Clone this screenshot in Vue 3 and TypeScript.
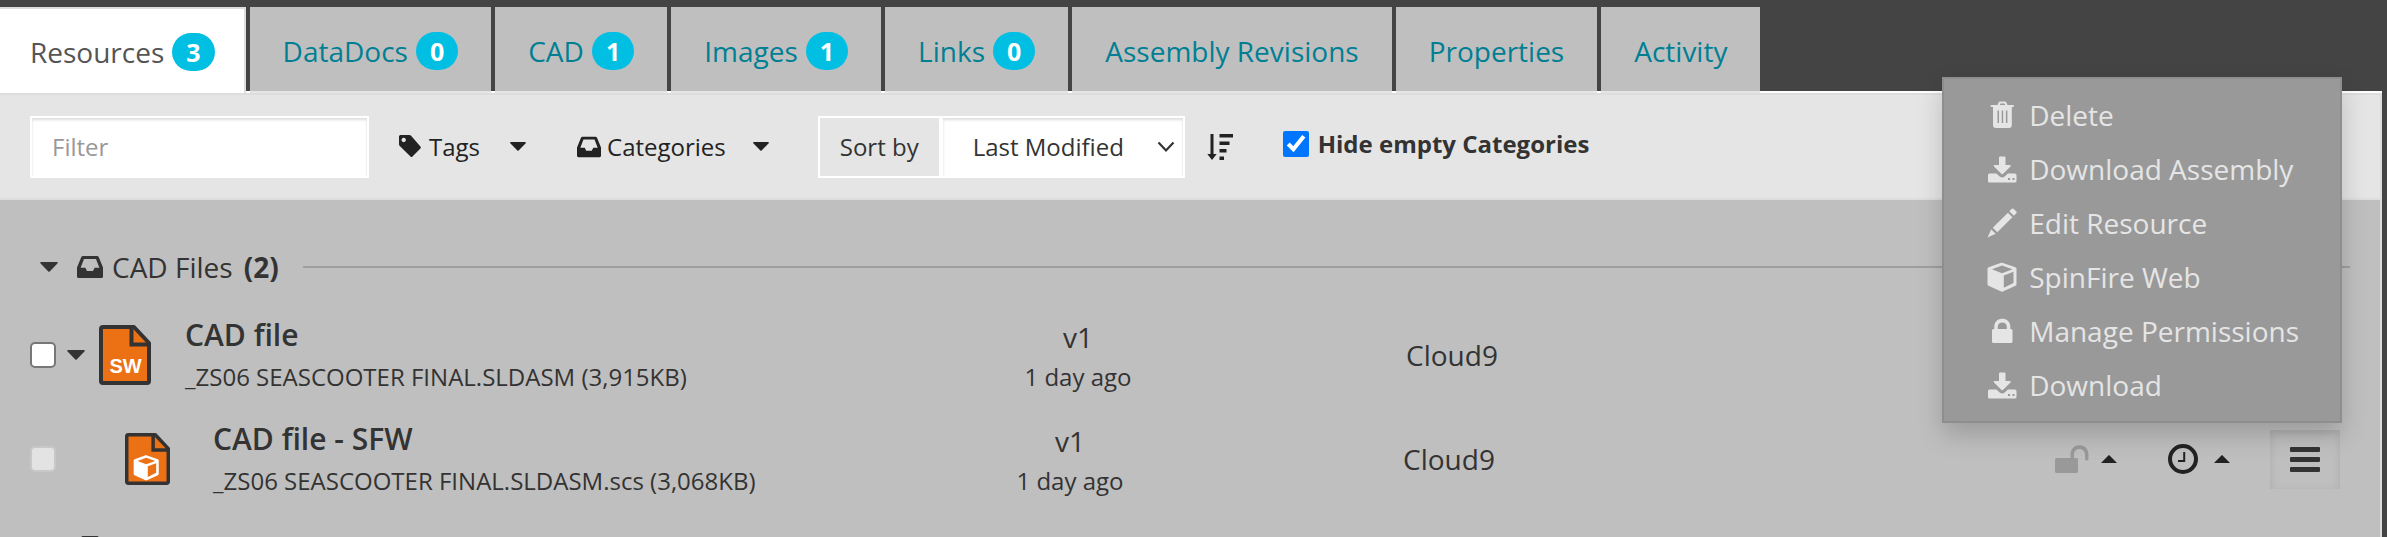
<script setup lang="ts">
import { ref } from 'vue'

interface Tab { label: string; count?: number }
interface MenuItem { label: string; icon: string }
interface FileRow { title: string; file: string; version: string; age: string; owner: string; child: boolean }

const tabs: Tab[] = [
  { label: 'Resources', count: 3 },
  { label: 'DataDocs', count: 0 },
  { label: 'CAD', count: 1 },
  { label: 'Images', count: 1 },
  { label: 'Links', count: 0 },
  { label: 'Assembly Revisions' },
  { label: 'Properties' },
  { label: 'Activity' },
]
const active = ref('Resources')
const filter = ref('')
const sortKey = ref('Last Modified')
const hideEmpty = ref(true)

const menu: MenuItem[] = [
  { label: 'Delete', icon: 'trash' },
  { label: 'Download Assembly', icon: 'download' },
  { label: 'Edit Resource', icon: 'pencil' },
  { label: 'SpinFire Web', icon: 'cube' },
  { label: 'Manage Permissions', icon: 'lock' },
  { label: 'Download', icon: 'download' },
]

const rows: FileRow[] = [
  { title: 'CAD file', file: '_ZS06 SEASCOOTER FINAL.SLDASM (3,915KB)', version: 'v1', age: '1 day ago', owner: 'Cloud9', child: false },
  { title: 'CAD file - SFW', file: '_ZS06 SEASCOOTER FINAL.SLDASM.scs (3,068KB)', version: 'v1', age: '1 day ago', owner: 'Cloud9', child: true },
]
</script>

<template>
  <div class="page">
    <svg class="defs" aria-hidden="true">
      <symbol id="inbox" viewBox="0 0 26 22">
        <path fill-rule="evenodd" d="M6 0h14q1.300 0 1.800 1.200L26 11.500V20.500q0 1.500-1.500 1.500h-23Q0 22 0 20.500V11.500L4.200 1.200Q4.700 0 6 0zM7 3L3.600 11.800H8.400L10 15h6l1.600-3.200h4.800L19 3z" />
      </symbol>
      <symbol id="down" viewBox="0 0 18 10"><path d="M1 0h16q1.400 .4 .4 1.600L9.700 9.500q-.7 .6-1.400 0L.6 1.600Q-.4 .4 1 0z" /></symbol>
      <symbol id="up" viewBox="0 0 16 8"><path d="M7.400.4q.6-.6 1.200 0L16 8H0z" /></symbol>
      <symbol id="trash" viewBox="0 0 30 30">
        <path fill-rule="evenodd" d="M10.500 5L11.600 2.400Q12 1.500 13 1.500h5q1 0 1.400.9L20.500 5H26q1 0 1 1t-1 1h-1.200v18q0 3-2.800 3H8.800Q6 28 6 25V7H4.500q-1 0-1-1t1-1zm2.300 0h5.400l-.7-1.500h-4zM10.500 10.500v12.500h1.500v-12.500zm4.200 0v12.500h1.500v-12.500zm4.200 0v12.500h1.500v-12.500z" />
      </symbol>
      <symbol id="download" viewBox="0 0 30 30">
        <path d="M12 3.500q0-1 1-1h4.500q1 0 1 1V11h4.500q1.300.3.500 1.400l-7.600 7.500q-.7.600-1.400 0L7 12.400Q6.200 11.300 7.500 11H12z" />
        <path fill-rule="evenodd" d="M2.500 19.500h7l3.200 3q2.500 1.800 5 0l3.200-3h7q1.600 0 1.600 1.500v6q0 1.500-1.600 1.500H2.500Q1 28.500 1 27v-6q0-1.500 1.500-1.500zm18.500 4.500v2h2v-2zm4.500 0v2h2v-2z" />
      </symbol>
      <symbol id="pencil" viewBox="0 0 32 32">
        <path d="M26.500 .8q.9-.8 1.800 0l3 3q.8.900 0 1.800l-2.700 2.700-4.800-4.800zM22.300 5l4.800 4.800L11 25.900 6.100 21.100zM4.500 22.800L9.300 27.500.5 31.500z" />
      </symbol>
      <symbol id="cube" viewBox="0 0 30 30">
        <path fill-rule="evenodd" d="M15.200 .8L28.400 5.200q1.100.5 1.100 1.600V22q0 1-1 1.700L15.800 29.600q-.8.400-1.600 0L1.500 23.700Q.5 23 .5 22V6.800q0-1.100 1.100-1.600L14.200.8zm-.2 2.800L5 7.200l10 4 10.500-4zM16.800 13.500v12.300l9.700-4.800V9.800z" />
      </symbol>
      <symbol id="lock" viewBox="0 0 30 30">
        <path fill-rule="evenodd" d="M7.300 13V10.500C7.300 0 23.300 0 23.300 10.500V13h.7q1.500 0 1.500 1.500v11q0 1.500-1.500 1.500H6.500Q5 27 5 25.500v-11Q5 13 6.500 13zm3.500 0h9V10.500C19.800 5 10.800 5 10.800 10.500z" />
      </symbol>
    </svg>

    <nav class="tabs">
      <a v-for="t in tabs" :key="t.label" href="#" class="tab" :class="{ active: active === t.label }" @click.prevent="active = t.label">
        {{ t.label }}<span v-if="t.count !== undefined" class="badge">{{ t.count }}</span>
      </a>
    </nav>

    <main class="panel">
      <div class="toolbar">
        <input v-model="filter" class="filter" type="text" placeholder="Filter" aria-label="Filter" />
        <button class="drop tags" type="button">
          <svg class="tag-ico" viewBox="0 0 22 24"><path fill-rule="evenodd" d="M1.500 0h8.800q1 0 1.800.8l9.300 10.700q.8 1 0 2L13.500 21.500q-1 1-2 0L.8 11Q0 10.200 0 9.200V1.500Q0 0 1.500 0zM4.700 2.800a2.200 2.200 0 1 0 .01 0z" /></svg>
          <span>Tags</span>
          <svg class="caret"><use href="#down" /></svg>
        </button>
        <button class="drop cats" type="button">
          <svg class="box-ico"><use href="#inbox" /></svg>
          <span>Categories</span>
          <svg class="caret"><use href="#down" /></svg>
        </button>
        <div class="sort">
          <label for="sort">Sort by</label>
          <div class="select-wrap">
            <select id="sort" v-model="sortKey"><option>Last Modified</option></select>
            <svg class="chev" viewBox="0 0 18 12"><path d="M1.500 1.500L9 9.500l7.500-8" fill="none" stroke="#333" stroke-width="2.200" /></svg>
          </div>
        </div>
        <button class="order" type="button" aria-label="Sort order">
          <svg viewBox="0 0 26 26"><path d="M3.500 0h3v20h3.200L5 26 .3 20h3.200zM12.500 0H26v3.500H12.500zM12.500 7.500h10V11h-10zM12.500 15h7v3.500h-7zM12.500 22.500h4.500V26h-4.500z" /></svg>
        </button>
        <label class="hide"><input v-model="hideEmpty" type="checkbox" /><span>Hide empty Categories</span></label>
      </div>

      <section class="content">
        <h2 class="group">
          <svg class="tri"><use href="#down" /></svg>
          <svg class="group-ico"><use href="#inbox" /></svg>
          <span>CAD Files <b>(2)</b></span>
          <i class="rule"></i>
        </h2>

        <div v-for="r in rows" :key="r.title" class="row" :class="{ child: r.child }">
          <div class="lead">
            <input type="checkbox" :aria-label="r.title" :disabled="r.child" />
            <svg v-if="!r.child" class="tri"><use href="#down" /></svg>
            <svg class="doc" viewBox="0 0 52 60">
              <path d="M4 2h31l15 16v38q0 2-2 2H4q-2 0-2-2V4q0-2 2-2z" fill="#ec7014" stroke="#333" stroke-width="4" stroke-linejoin="round" />
              <path d="M32.500 3v16.500H50" fill="none" stroke="#333" stroke-width="4" />
              <text v-if="!r.child" x="26.500" y="48" text-anchor="middle" class="doc-text">SW</text>
              <use v-else href="#cube" x="9" y="25" width="31" height="30" fill="#fff" />
            </svg>
          </div>
          <div class="name"><strong>{{ r.title }}</strong><small>{{ r.file }}</small></div>
          <div class="version"><span>{{ r.version }}</span><small>{{ r.age }}</small></div>
          <div class="owner">{{ r.owner }}</div>
          <div v-if="r.child" class="actions">
            <button type="button" class="act perm" aria-label="Permissions">
              <svg class="unlock" viewBox="0 0 34 28"><path fill="#999" d="M1.500 13H15.500V9.500C15.500-3 33.500-3 33.500 9.500V14q0 1.500-1.800 1.500T30 14V9.500C30 2 19 2 19 9.500V13h2.500q1.500 0 1.500 1.500v12q0 1.500-1.500 1.500h-20Q0 28 0 26.500v-12Q0 13 1.500 13z" /></svg>
              <svg class="up"><use href="#up" /></svg>
            </button>
            <button type="button" class="act hist" aria-label="History">
              <svg class="clock" viewBox="0 0 30 30"><circle cx="15" cy="15" r="13" fill="none" stroke="#222" stroke-width="4" /><path d="M16.200 8v9H10" fill="none" stroke="#222" stroke-width="2" /></svg>
              <svg class="up"><use href="#up" /></svg>
            </button>
            <div class="menu-anchor">
              <button type="button" class="burger" aria-label="Menu">
                <svg viewBox="0 0 30 25"><path d="M1 0h28q1 0 1 1v3q0 1-1 1H1Q0 5 0 4V1Q0 0 1 0zM1 10h28q1 0 1 1v3q0 1-1 1H1q-1 0-1-1v-3q0-1 1-1zM1 20h28q1 0 1 1v3q0 1-1 1H1q-1 0-1-1v-3q0-1 1-1z" /></svg>
              </button>
              <div class="menu">
                <button v-for="m in menu" :key="m.label" type="button">
                  <svg><use :href="'#' + m.icon" /></svg>{{ m.label }}
                </button>
              </div>
            </div>
          </div>
        </div>

        <h2 class="group last">
          <svg class="tri"><use href="#down" /></svg>
          <svg class="group-ico"><use href="#inbox" /></svg>
          <span>Unassigned</span>
        </h2>
      </section>
    </main>
  </div>
</template>

<style>
html, body { margin: 0; height: 100%; overflow: hidden; background: #444; }
#app { height: 100%; }
</style>

<style scoped>
.page { height: 100%; overflow: hidden; display: flex; flex-direction: column; background: #444; color: #333; font-family: "Segoe UI", "Open Sans", "Noto Sans", sans-serif; font-size: 28px; line-height: 40px; }
.page * { box-sizing: border-box; }
.defs { display: none; }
button, input, select { font: inherit; color: inherit; }
button { padding: 0; border: 0; background: none; text-align: left; cursor: pointer; }
svg { flex: none; display: block; fill: currentColor; }

.tabs { flex: none; display: flex; gap: 4px; padding-top: 7px; margin-right: 5px; border-bottom: 2px solid #fff; }
.tab { display: flex; align-items: center; gap: 8px; height: 86px; margin-bottom: -2px; padding: 4px 33px 0; background: #bfbfbf; border-bottom: 2px solid #e5e5e5; color: #007f94; text-decoration: none; }
.tab.active { padding: 2px 29px 0 30px; background: #fff; border: solid #ddd; border-width: 2px 2px 0 0; color: #555; }
.badge { height: 38px; padding: 0 14px; border-radius: 20px; background: #00bfe3; color: #fff; font-size: 25px; font-weight: 700; line-height: 38px; }

.panel { flex: 1; display: flex; flex-direction: column; margin-right: 5px; border: solid #ddd; border-width: 2px 2px 0 0; background: #bfbfbf; }
.toolbar { flex: none; display: flex; align-items: center; height: 105px; padding: 0 30px; background: #e5e5e5; border-bottom: 2px solid #ddd; color: #222; font-size: 24px; }
.filter { width: 339px; height: 62px; padding: 0 20px; border: 2px solid #fff; border-radius: 0; outline: 0; background: #fff; box-shadow: inset 0 2px 3px #ddd; }
.filter::placeholder { color: #999; opacity: 1; }
.drop { display: flex; align-items: center; }
.tags { margin-left: 30px; }
.cats { margin-left: 51px; }
.tag-ico { width: 22px; height: 24px; margin-right: 8px; }
.box-ico { width: 24px; height: 22px; margin-right: 6px; }
.caret { width: 16px; height: 9px; margin-left: 30px; }
.cats .caret { margin-left: 27px; }
.sort { display: flex; height: 62px; margin-left: 49px; color: #333; }
.sort label { display: flex; align-items: center; padding: 0 20px; border: 2px solid #fff; }
.select-wrap { position: relative; }
.select-wrap select { height: 62px; width: 244px; padding: 0 30px; border: 2px solid #fff; border-radius: 0; background: #fff; appearance: none; box-shadow: inset 0 2px 3px #ddd; }
.chev { position: absolute; right: 10px; top: 25px; width: 18px; height: 12px; pointer-events: none; }
.order { margin-left: 22px; }
.order svg { width: 26px; height: 26px; }
.hide { display: flex; align-items: center; gap: 9px; margin: 0 0 6px 50px; color: #333; font-weight: 700; }
.hide input { width: 26px; height: 26px; margin: 0; accent-color: #0075ff; }

.content { flex: 1; display: flex; flex-direction: column; padding-top: 47px; }
.group { display: flex; align-items: center; height: 40px; margin: 0 30px 0 40px; font-size: 28px; font-weight: 400; line-height: 40px; }
.group b { margin-left: 4px; }
.tri { width: 18px; height: 10px; }
.group-ico { width: 26px; height: 22px; margin: 0 9px 0 19px; }
.rule { flex: 1; height: 2px; margin-left: 24px; background: #9f9f9f; }
.last { margin-top: 16px; }

.row { display: grid; grid-template-columns: 155px 700fr 386fr 362fr 707fr; align-items: center; height: 104px; padding: 0 40px 0 30px; }
.group + .row { margin-top: 16px; }
.row.child { grid-template-columns: 183px 670fr 374fr 384fr 699fr; }
.lead { display: flex; align-items: center; }
.lead input { appearance: none; width: 26px; height: 26px; margin: 0; border: 2px solid #777; border-radius: 5px; background: #fff; }
.lead input:disabled { border-color: #c8c8c8; background: #e3e3e3; }
.lead .tri { margin-left: 11px; }
.doc { width: 52px; height: 60px; margin-left: 14px; }
.child .doc { width: 45px; height: 52px; margin-left: 69px; }
.doc-text { fill: #fff; font: 700 20px "Liberation Sans", Arial, sans-serif; }
.name, .version { display: flex; flex-direction: column; white-space: nowrap; }
.name strong { font-size: 30px; font-weight: 600; line-height: 44px; }
small { font-size: 24px; line-height: 40px; }
.version { align-items: center; padding-top: 4px; }
.owner { text-align: center; }
.actions { display: flex; align-items: center; justify-self: end; }
.act { display: flex; align-items: center; color: #222; }
.up { width: 16px; height: 8px; }
.unlock { width: 34px; height: 28px; margin-right: 12px; }
.clock { width: 30px; height: 30px; margin-right: 16px; }
.hist { margin-left: 51px; }
.menu-anchor { position: relative; margin-left: 40px; }
.burger { display: flex; align-items: center; justify-content: center; width: 70px; height: 59px; box-shadow: inset 0 3px 8px #aaa; }
.burger svg { width: 30px; height: 25px; }
.menu { position: absolute; right: -2px; bottom: 66px; display: flex; flex-direction: column; padding: 9px 0; border: 2px solid #8e8e8e; background: #999; box-shadow: 0 12px 24px rgba(0, 0, 0, .18); color: #e5e5e5; }
.menu button { display: flex; align-items: center; gap: 12px; height: 54px; padding: 0 41px 0 43px; white-space: nowrap; }
.menu svg { width: 30px; height: 30px; }
</style>
